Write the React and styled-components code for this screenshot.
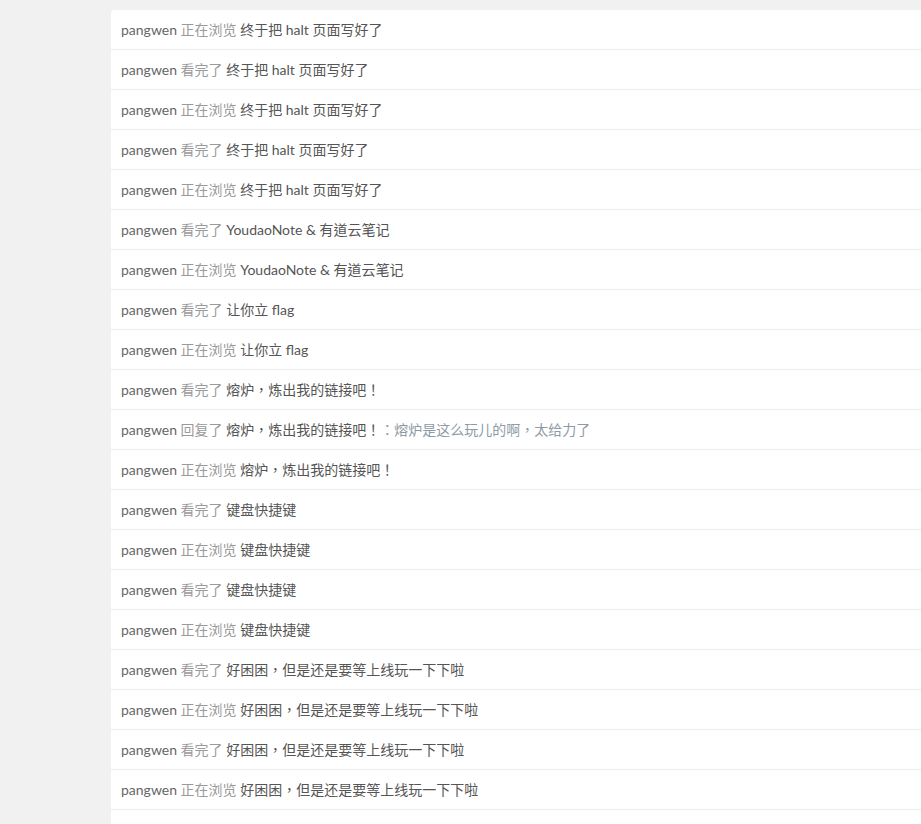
import React from "react";
import styled, { createGlobalStyle } from "styled-components";

const GlobalStyle = createGlobalStyle`
  html, body {
    margin: 0;
    padding: 0;
    background: #f1f1f1;
    overflow: hidden;
  }
  body {
    font-family: Lato, "Noto Sans CJK TC", "Noto Sans CJK SC", sans-serif;
  }
`;

const Page = styled.div`
  display: flex;
  padding: 10px 0 0 111px;
  height: 814px;
  overflow: hidden;
`;

const Feed = styled.ul`
  flex: 1;
  margin: 0;
  padding: 0;
  list-style: none;
  background: #fff;
  border-radius: 3px 0 0 0;
`;

const Row = styled.li`
  height: 29px;
  padding: 10px 0 0 10px;
  line-height: 20px;
  border-bottom: 1px solid #ececec;
  font-size: 14px;
  white-space: nowrap;
  color: #555;
`;

const User = styled.span`
  color: #666;
`;

const Action = styled.span`
  color: #9a9a9a;
`;

const Title = styled.span`
  color: #555;
`;

const Reply = styled.span`
  color: #8e9aa6;
`;

const T1 = "终于把 halt 页面写好了";
const T2 = "YoudaoNote & 有道云笔记";
const T3 = "让你立 flag";
const T4 = "熔炉，炼出我的链接吧！";
const T5 = "键盘快捷键";
const T6 = "好困困，但是还是要等上线玩一下下啦";

const items = [
  ["正在浏览", T1],
  ["看完了", T1],
  ["正在浏览", T1],
  ["看完了", T1],
  ["正在浏览", T1],
  ["看完了", T2],
  ["正在浏览", T2],
  ["看完了", T3],
  ["正在浏览", T3],
  ["看完了", T4],
  ["回复了", T4, "熔炉是这么玩儿的啊，太给力了"],
  ["正在浏览", T4],
  ["看完了", T5],
  ["正在浏览", T5],
  ["看完了", T5],
  ["正在浏览", T5],
  ["看完了", T6],
  ["正在浏览", T6],
  ["看完了", T6],
  ["正在浏览", T6],
];

export default function App() {
  return (
    <>
      <GlobalStyle />
      <Page>
        <Feed>
          {items.map(([action, title, reply], i) => (
            <Row key={i}>
              <User>pangwen</User> <Action>{action}</Action>{" "}
              <Title>{title}</Title>
              {reply && <Reply>：{reply}</Reply>}
            </Row>
          ))}
        </Feed>
      </Page>
    </>
  );
}
